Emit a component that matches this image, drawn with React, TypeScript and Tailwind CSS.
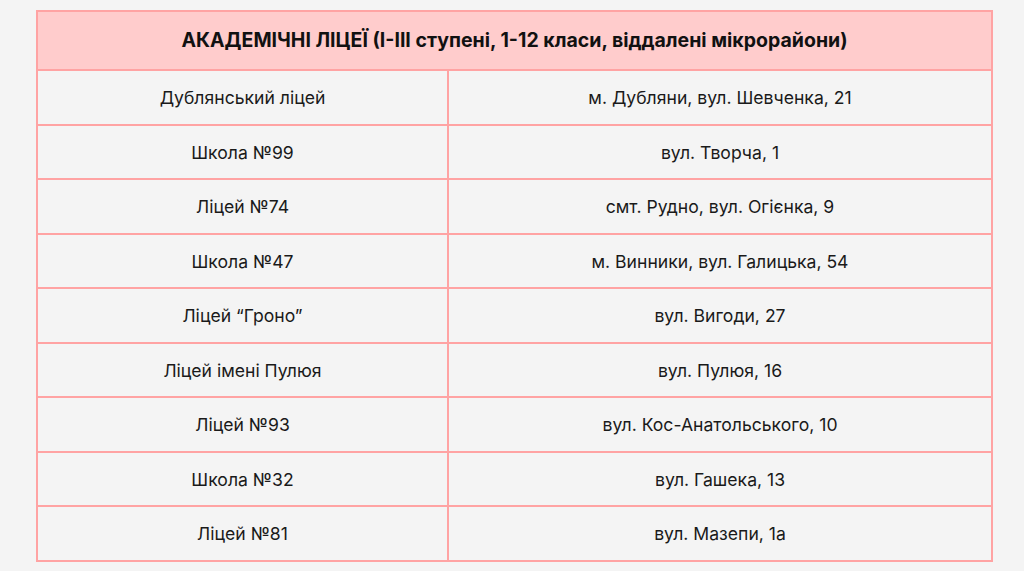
const rows: [string, string][] = [
  ["Дублянський ліцей", "м. Дубляни, вул. Шевченка, 21"],
  ["Школа №99", "вул. Творча, 1"],
  ["Ліцей №74", "смт. Рудно, вул. Огієнка, 9"],
  ["Школа №47", "м. Винники, вул. Галицька, 54"],
  ["Ліцей “Гроно”", "вул. Вигоди, 27"],
  ["Ліцей імені Пулюя", "вул. Пулюя, 16"],
  ["Ліцей №93", "вул. Кос-Анатольського, 10"],
  ["Школа №32", "вул. Гашека, 13"],
  ["Ліцей №81", "вул. Мазепи, 1а"],
];

export default function App() {
  return (
    <div
      className="min-h-[571px] w-full bg-[#f4f4f4] pt-[10px] px-[36px]"
      style={{ fontFamily: "Inter, 'Noto Sans', sans-serif" }}
    >
      <table className="w-[957px] border-collapse text-[17.6px] text-[#1a1a1a]">
        <thead>
          <tr className="h-[59px] bg-[#ffcccc]">
            <th
              colSpan={2}
              className="border-2 border-[#ffa3a3] text-[19.5px] font-bold text-[#111] text-center"
            >
              АКАДЕМІЧНІ ЛІЦЕЇ (I-III ступені, 1-12 класи, віддалені мікрорайони)
            </th>
          </tr>
        </thead>
        <tbody>
          {rows.map(([name, address]) => (
            <tr key={name} className="h-[54.5px]">
              <td className="w-[411px] border-2 border-[#ffa3a3] pt-[2px] text-center">
                {name}
              </td>
              <td className="border-2 border-[#ffa3a3] pt-[2px] text-center">{address}</td>
            </tr>
          ))}
        </tbody>
      </table>
    </div>
  );
}
